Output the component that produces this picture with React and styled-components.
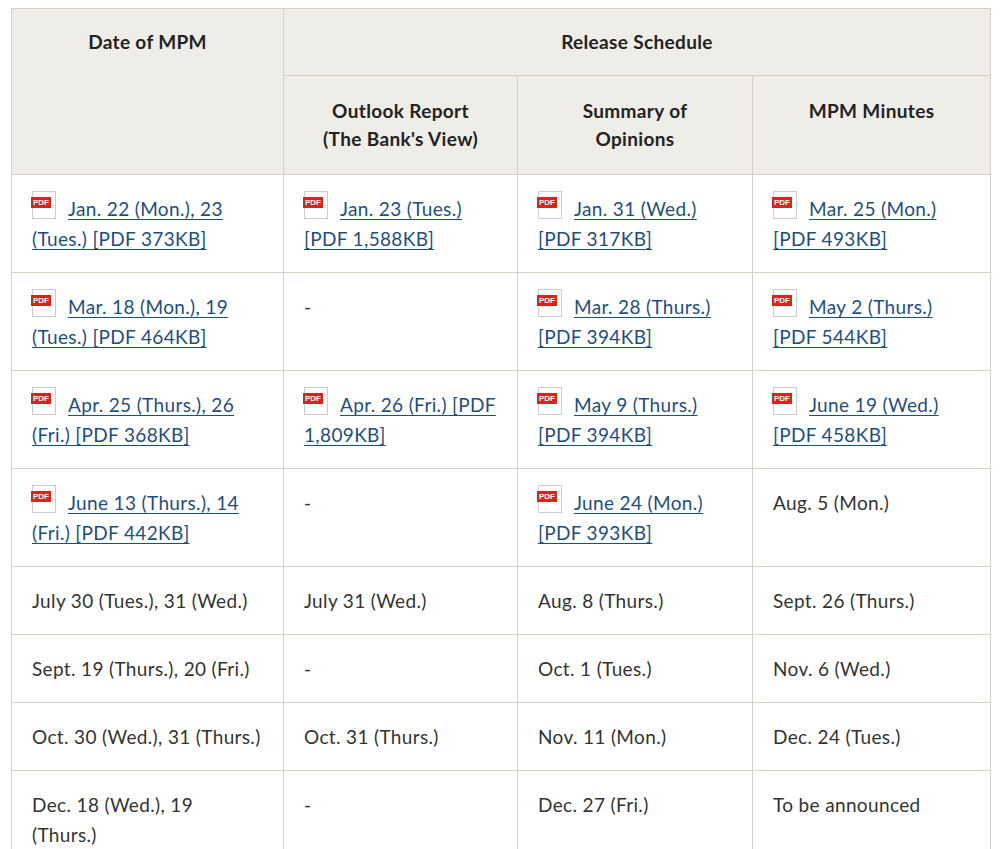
import React from "react";
import styled, { createGlobalStyle } from "styled-components";

const G = createGlobalStyle`
  body { margin: 8px 11px; background: #fff; font-family: "Lato", "Noto Sans", sans-serif; }
`;
const Table = styled.table`
  border-collapse: collapse; width: 980px; table-layout: fixed;
  font-size: 19px; letter-spacing: 0.35px; color: #333; line-height: 30px;
`;
const Th = styled.th`
  background: #efede8; border: 1px solid #d8d0c2; font-weight: 700; color: #222;
  padding: ${p => (p.$pad || "19px 20px")}; text-align: center; vertical-align: top;
  line-height: 28px;
`;
const Td = styled.td`
  border: 1px solid #d8d0c2; padding: 19px 20px 18px; vertical-align: top;
`;
const A = styled.a`
  color: #1d4e80; text-decoration: underline; text-underline-offset: 3px;
`;
const Pdf = styled.span`
  display: inline-block; width: 22px; height: 26px; margin-right: 12px; vertical-align: -3px;
  margin-top: -6px; border: 1px solid #ccc; background: #fff; position: relative;
  &::after { content: "PDF"; position: absolute; left: -2px; top: 5px; background: #e0201b; color: #fff;
    font: bold 8px "Liberation Sans", sans-serif; letter-spacing: 0; line-height: 11px; padding: 0 2px; }
`;

const L = ({ t }) => t === "-" || !t.includes("[") ? t : (<><Pdf /><A href="#">{t}</A></>);

const rows = [
  ["Jan. 22 (Mon.), 23 (Tues.) [PDF 373KB]", "Jan. 23 (Tues.) [PDF 1,588KB]", "Jan. 31 (Wed.) [PDF 317KB]", "Mar. 25 (Mon.) [PDF 493KB]"],
  ["Mar. 18 (Mon.), 19 (Tues.) [PDF 464KB]", "-", "Mar. 28 (Thurs.) [PDF 394KB]", "May 2 (Thurs.) [PDF 544KB]"],
  ["Apr. 25 (Thurs.), 26 (Fri.) [PDF 368KB]", "Apr. 26 (Fri.) [PDF 1,809KB]", "May 9 (Thurs.) [PDF 394KB]", "June 19 (Wed.) [PDF 458KB]"],
  ["June 13 (Thurs.), 14 (Fri.) [PDF 442KB]", "-", "June 24 (Mon.) [PDF 393KB]", "Aug. 5 (Mon.)"],
  ["July 30 (Tues.), 31 (Wed.)", "July 31 (Wed.)", "Aug. 8 (Thurs.)", "Sept. 26 (Thurs.)"],
  ["Sept. 19 (Thurs.), 20 (Fri.)", "-", "Oct. 1 (Tues.)", "Nov. 6 (Wed.)"],
  ["Oct. 30 (Wed.), 31 (Thurs.)", "Oct. 31 (Thurs.)", "Nov. 11 (Mon.)", "Dec. 24 (Tues.)"],
  ["Dec. 18 (Wed.), 19 (Thurs.)", "-", "Dec. 27 (Fri.)", "To be announced"],
];

export default function App() {
  return (
    <>
      <G />
      <Table>
        <colgroup><col style={{ width: 272 }} /><col style={{ width: 234 }} /><col style={{ width: 235 }} /><col /></colgroup>
        <thead>
          <tr><Th rowSpan={2}>Date of MPM</Th><Th colSpan={3}>Release Schedule</Th></tr>
          <tr><Th $pad="21px 20px">Outlook Report<br />(The Bank's View)</Th><Th $pad="21px 20px">Summary of<br />Opinions</Th><Th $pad="21px 20px">MPM Minutes</Th></tr>
        </thead>
        <tbody>
          {rows.map((r, i) => (
            <tr key={i}>{r.map((c, j) => <Td key={j}><L t={c} /></Td>)}</tr>
          ))}
        </tbody>
      </Table>
    </>
  );
}
